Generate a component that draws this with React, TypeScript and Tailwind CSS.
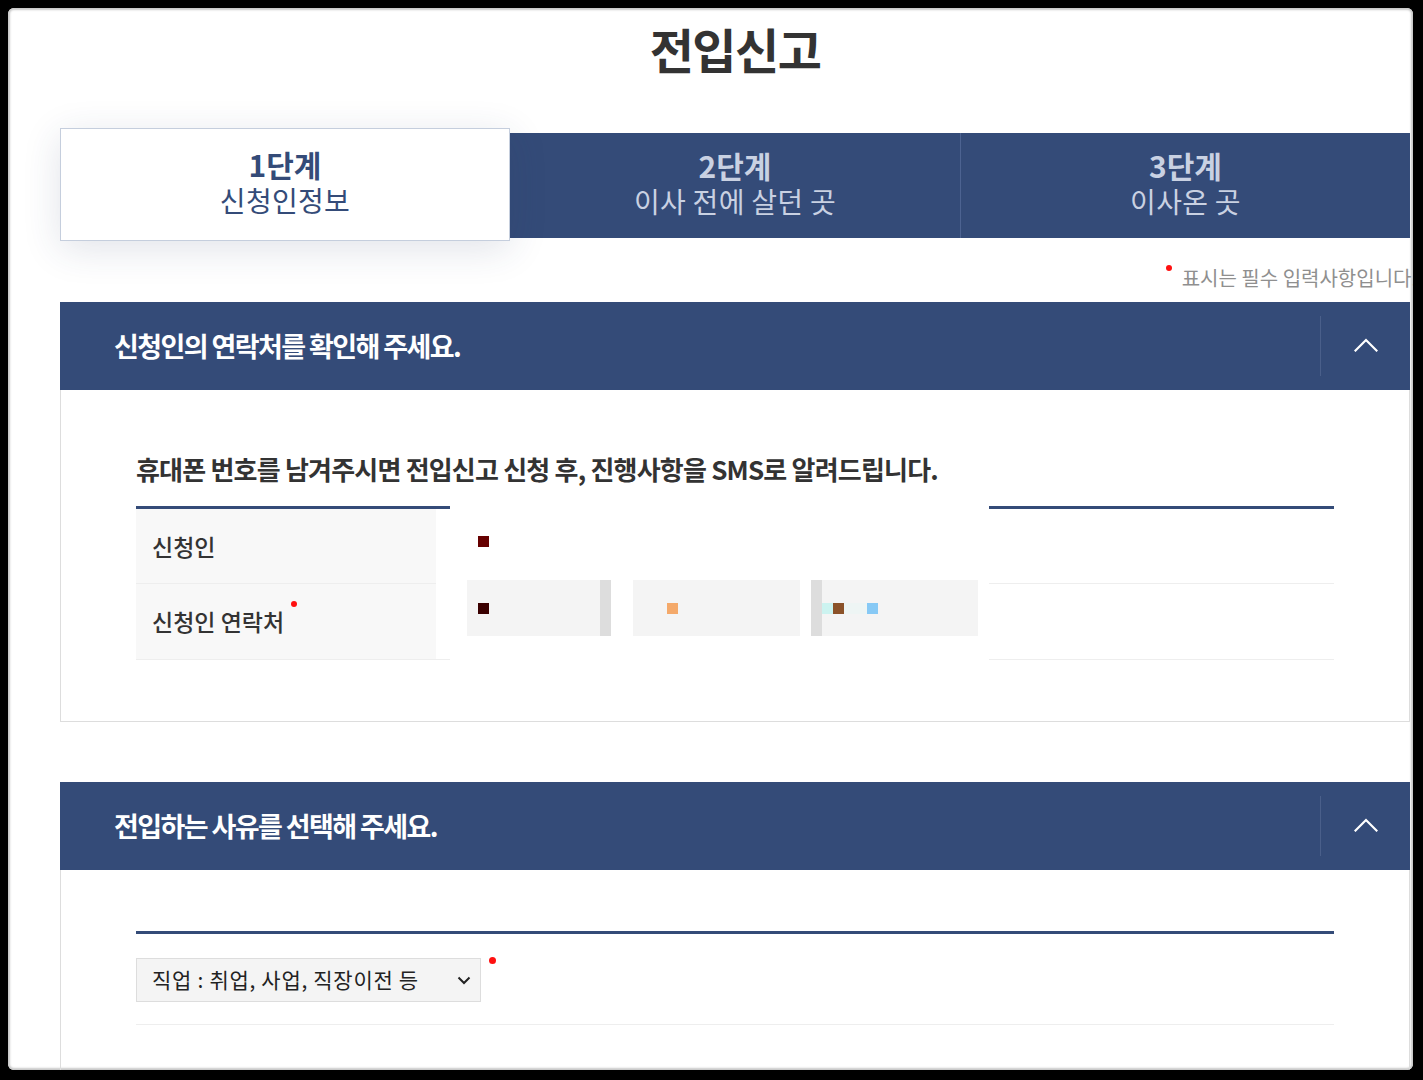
import React from "react";

const font = "font-['Noto_Sans_CJK_KR','Noto_Sans',sans-serif]";

function Chevron() {
  return (
    <svg width="24" height="14" viewBox="0 0 24 14" fill="none">
      <polyline points="1.5,12.5 12,2 22.5,12.5" stroke="#ffffff" strokeWidth="2.2" strokeLinecap="square" />
    </svg>
  );
}

function SectionHeader({ title }: { title: string }) {
  return (
    <div className="flex h-[88px] items-center bg-[#344b78]">
      <h2 className="flex-1 pl-[54px] text-[27px] font-bold tracking-[-1.6px] text-white">{title}</h2>
      <div className="h-[60px] w-px bg-[#4a5f8a]" />
      <div className="flex w-[89px] items-center justify-center pb-[2px]">
        <Chevron />
      </div>
    </div>
  );
}

function Dot({ color }: { color: string }) {
  return <span className={`block h-[11px] w-[11px] ${color}`} />;
}

function Step({ num, label, active, last }: { num: string; label: string; active?: boolean; last?: boolean }) {
  const width = last ? "w-[449px]" : "w-[450px]";
  return (
    <div
      className={
        active
          ? "relative z-10 flex h-[113px] w-[450px] shrink-0 flex-col items-center justify-center border border-[#c5cedd] bg-white pb-[6px] text-[#344b78] shadow-[0_8px_36px_rgba(40,60,100,0.14)]"
          : `flex h-[105px] ${width} shrink-0 flex-col items-center justify-center bg-[#344b78] pb-[6px] text-[#c9d1e2]`
      }
    >
      <div className="text-[30px] font-bold leading-[36px]">{num}</div>
      <div className="text-[28px] leading-[36px] tracking-[0.3px]">{label}</div>
    </div>
  );
}

export default function App() {
  return (
    <div className={`h-[1080px] w-[1423px] overflow-hidden bg-black pl-[8px] pt-[8px] ${font}`}>
      <div className="h-[1062px] w-[1405px] overflow-hidden rounded-[6px] bg-white shadow-[inset_0_0_2px_2px_#c8c8c8]">
        <div className="ml-[52px] w-[1350px]">
          <h1 className="pt-[16px] text-center text-[48px] font-bold leading-none tracking-[-1.5px] text-[#333]">전입신고</h1>

          {/* steps */}
          <div className="mt-[56px] flex h-[113px] items-start">
            <Step num="1단계" label="신청인정보" active />
            <div className="mt-[5px] flex">
              <Step num="2단계" label="이사 전에 살던 곳" />
              <div className="h-[105px] w-px shrink-0 bg-[#4d6391]" />
              <Step num="3단계" label="이사온 곳" last />
            </div>
          </div>

          <div className="mt-[21px] flex h-[40px] items-start justify-end">
            <span className="mr-[10px] mt-[3px] block h-[6px] w-[6px] rounded-full bg-[#ff1010]" />
            <span className="mr-[-7px] mt-[1px] whitespace-nowrap text-[20px] text-[#8f8f8f]">표시는 필수 입력사항입니다.</span>
          </div>

          {/* section 1 */}
          <SectionHeader title="신청인의 연락처를 확인해 주세요." />
          <div className="border-x border-b border-[#dddddd] px-[75px] pb-[61px] pt-[59px]">
            <p className="text-[26px] font-bold tracking-[-0.8px] text-[#333]">휴대폰 번호를 남겨주시면 전입신고 신청 후, 진행사항을 SMS로 알려드립니다.</p>
            <div className="mt-[18px] flex">
              <div className="w-[314px] border-t-[3px] border-[#344b78]">
                <div className="flex h-[75px] w-[300px] items-center border-b border-[#eeeeee] bg-[#f8f8f8] pl-[16px] text-[23px] font-medium text-[#333]">
                  신청인
                </div>
                <div className="relative h-[76px] border-b border-[#eeeeee]">
                  <div className="flex h-full w-[300px] items-center bg-[#f8f8f8] pl-[16px] text-[23px] font-medium text-[#333]">
                    신청인 연락처
                    <span className="absolute left-[155px] top-[17px] h-[6px] w-[6px] rounded-full bg-[#ff1010]" />
                  </div>
                </div>
              </div>
              <div className="w-[539px] pt-[30px]">
                <div className="ml-[28px]">
                  <Dot color="bg-[#660000]" />
                </div>
                <div className="mt-[33px] flex h-[56px] items-stretch">
                  <div className="ml-[17px] flex w-[133px] items-center bg-[#f4f4f4] pl-[11px]">
                    <Dot color="bg-[#3a0000]" />
                  </div>
                  <div className="w-[11px] bg-[#dddddd]" />
                  <div className="ml-[22px] flex w-[167px] items-center bg-[#f4f4f4] pl-[34px]">
                    <Dot color="bg-[#f4a96a]" />
                  </div>
                  <div className="ml-[11px] w-[11px] bg-[#dddddd]" />
                  <div className="flex w-[156px] items-center bg-[#f4f4f4]">
                    <Dot color="bg-[#ccf3f0]" />
                    <Dot color="bg-[#8b5229]" />
                    <span className="block h-[11px] w-[23px] bg-[#eef5f4]" />
                    <Dot color="bg-[#87c9f5]" />
                  </div>
                </div>
              </div>
              <div className="flex-1 border-t-[3px] border-[#344b78]">
                <div className="h-[75px] border-b border-[#eeeeee]" />
                <div className="h-[76px] border-b border-[#eeeeee]" />
              </div>
            </div>
          </div>

          {/* section 2 */}
          <div className="mt-[60px]">
            <SectionHeader title="전입하는 사유를 선택해 주세요." />
            <div className="h-[300px] border-x border-[#dddddd] px-[75px] pt-[61px]">
              <div className="border-t-[3px] border-[#344b78]" />
              <div className="flex h-[91px] items-start border-b border-[#eeeeee] pt-[24px]">
                <div className="flex h-[44px] w-[345px] items-center justify-between border border-[#dddddd] bg-[#f4f4f4] pl-[15px] pr-[9px] text-[21px] tracking-[0.7px] text-[#222]">
                  <span>직업 : 취업, 사업, 직장이전 등</span>
                  <svg width="14" height="9" viewBox="0 0 14 9" fill="none">
                    <polyline points="1.5,1.5 7,7 12.5,1.5" stroke="#222" strokeWidth="2" />
                  </svg>
                </div>
                <span className="ml-[8px] mt-[-1px] block h-[7px] w-[7px] rounded-full bg-[#ff1010]" />
              </div>
            </div>
          </div>
        </div>
      </div>
    </div>
  );
}
